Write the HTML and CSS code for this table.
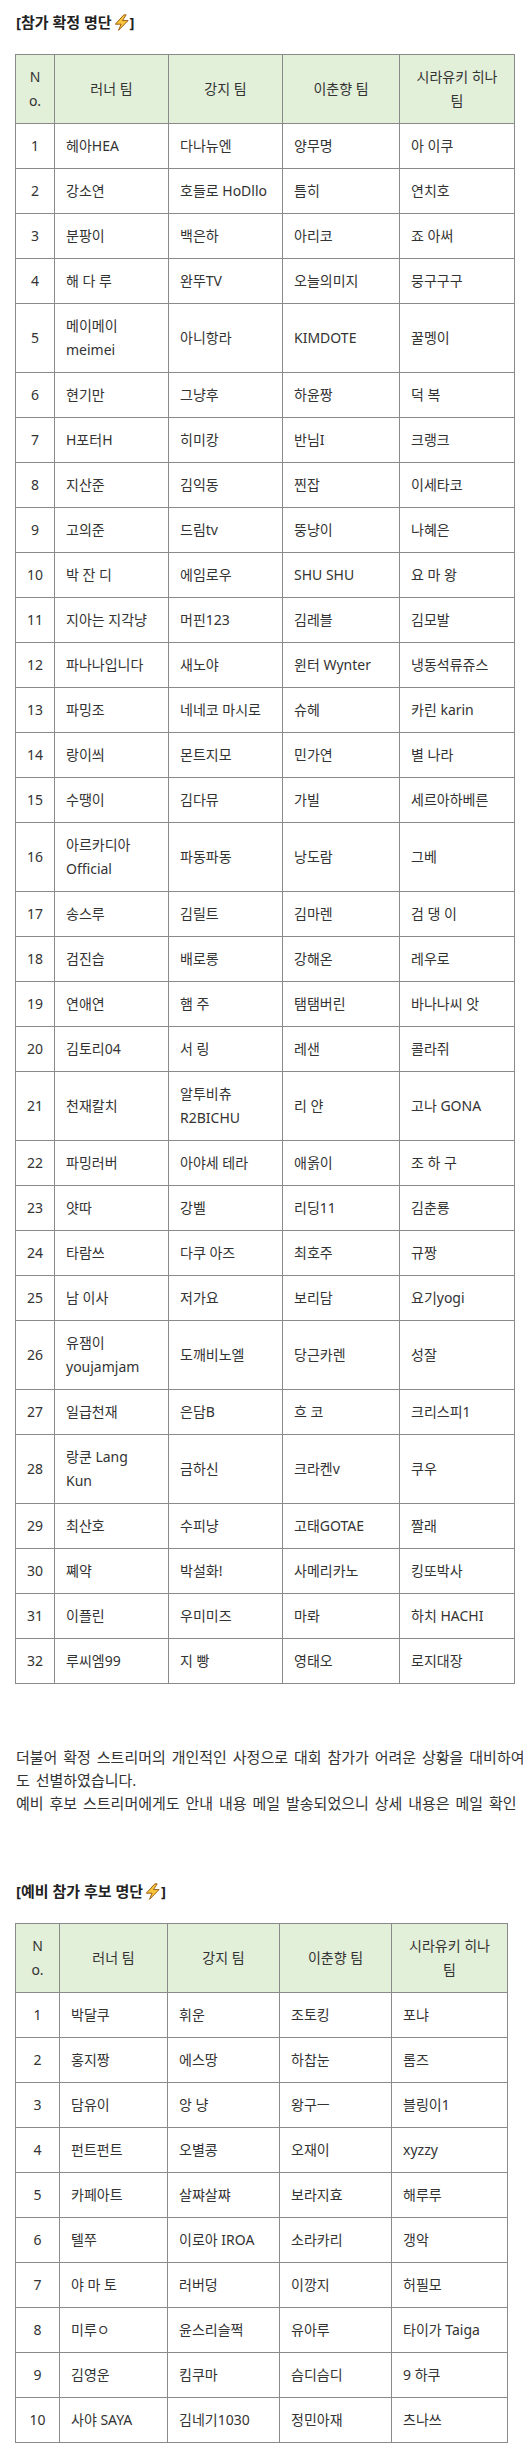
FILE: index.html
```html
<!DOCTYPE html>
<html lang="ko">
<head>
<meta charset="utf-8">
<title>참가 확정 명단</title>
<link rel="stylesheet" href="styles.css">
</head>
<body>
<div class="post">
  <p class="heading">[참가 확정 명단<svg class="bolt" viewBox="0 0 16 16" aria-hidden="true"><polygon points="10.2,0.8 2.2,9.6 7.6,9.6 5.2,15.4 14.2,6.2 8.9,6.2 12.4,0.8"/></svg>]</p>
  <table class="roster roster--main">
    <colgroup>
      <col class="c-no"><col class="c-a"><col class="c-b"><col class="c-c"><col class="c-d">
    </colgroup>
    <thead>
      <tr><th class="num">No.</th><th>러너 팀</th><th>강지 팀</th><th>이춘향 팀</th><th>시라유키 히나 팀</th></tr>
    </thead>
    <tbody>
      <tr><td class="num">1</td><td>헤아HEA</td><td>다나뉴엔</td><td>양무명</td><td>아 이쿠</td></tr>
      <tr><td class="num">2</td><td>강소연</td><td>호들로 HoDllo</td><td>틈히</td><td>연치호</td></tr>
      <tr><td class="num">3</td><td>분팡이</td><td>백은하</td><td>아리코</td><td>죠 아써</td></tr>
      <tr><td class="num">4</td><td>해 다 루</td><td>완뚜TV</td><td>오늘의미지</td><td>뭉구구구</td></tr>
      <tr><td class="num">5</td><td>메이메이 meimei</td><td>아니항라</td><td>KIMDOTE</td><td>꿀멩이</td></tr>
      <tr><td class="num">6</td><td>현기만</td><td>그냥후</td><td>하윤짱</td><td>덕 복</td></tr>
      <tr><td class="num">7</td><td>H포터H</td><td>히미캉</td><td>반님I</td><td>크랭크</td></tr>
      <tr><td class="num">8</td><td>지산준</td><td>김익동</td><td>찐잡</td><td>이세타코</td></tr>
      <tr><td class="num">9</td><td>고의준</td><td>드림tv</td><td>뚱냥이</td><td>나혜은</td></tr>
      <tr><td class="num">10</td><td>박 잔 디</td><td>에임로우</td><td>SHU SHU</td><td>요 마 왕</td></tr>
      <tr><td class="num">11</td><td>지아는 지각냥</td><td>머핀123</td><td>김레블</td><td>김모발</td></tr>
      <tr><td class="num">12</td><td>파나나입니다</td><td>새노야</td><td>윈터 Wynter</td><td>냉동석류쥬스</td></tr>
      <tr><td class="num">13</td><td>파밍조</td><td>네네코 마시로</td><td>슈헤</td><td>카린 karin</td></tr>
      <tr><td class="num">14</td><td>랑이씌</td><td>몬트지모</td><td>민가연</td><td>별 나라</td></tr>
      <tr><td class="num">15</td><td>수땡이</td><td>김다뮤</td><td>가빌</td><td>세르아하베른</td></tr>
      <tr><td class="num">16</td><td>아르카디아 Official</td><td>파동파동</td><td>낭도람</td><td>그베</td></tr>
      <tr><td class="num">17</td><td>송스루</td><td>김릴트</td><td>김마렌</td><td>검 댕 이</td></tr>
      <tr><td class="num">18</td><td>검진습</td><td>배로롱</td><td>강해온</td><td>레우로</td></tr>
      <tr><td class="num">19</td><td>연애연</td><td>햄 주</td><td>탬탬버린</td><td>바나나씨 앗</td></tr>
      <tr><td class="num">20</td><td>김토리04</td><td>서 링</td><td>레샌</td><td>콜라쥐</td></tr>
      <tr><td class="num">21</td><td>천재칼치</td><td>알투비츄 R2BICHU</td><td>리 얀</td><td>고나 GONA</td></tr>
      <tr><td class="num">22</td><td>파밍러버</td><td>아야세 테라</td><td>애옭이</td><td>조 하 구</td></tr>
      <tr><td class="num">23</td><td>얏따</td><td>강벨</td><td>리딩11</td><td>김춘룡</td></tr>
      <tr><td class="num">24</td><td>타람쓰</td><td>다쿠 아즈</td><td>최호주</td><td>규짱</td></tr>
      <tr><td class="num">25</td><td>남 이사</td><td>저가요</td><td>보리담</td><td>요기yogi</td></tr>
      <tr><td class="num">26</td><td>유잼이 youjamjam</td><td>도깨비노엘</td><td>당근카렌</td><td>성잘</td></tr>
      <tr><td class="num">27</td><td>일급천재</td><td>은담B</td><td>흐 코</td><td>크리스피1</td></tr>
      <tr><td class="num">28</td><td>랑쿤 Lang Kun</td><td>금하신</td><td>크라켄v</td><td>쿠우</td></tr>
      <tr><td class="num">29</td><td>최산호</td><td>수피냥</td><td>고태GOTAE</td><td>짤래</td></tr>
      <tr><td class="num">30</td><td>쪠약</td><td>박설화!</td><td>사메리카노</td><td>킹또박사</td></tr>
      <tr><td class="num">31</td><td>이플린</td><td>우미미즈</td><td>마롸</td><td>하치 HACHI</td></tr>
      <tr><td class="num">32</td><td>루씨엠99</td><td>지 빵</td><td>영태오</td><td>로지대장</td></tr>
    </tbody>
  </table>

  <p class="notice">더불어 확정 스트리머의 개인적인 사정으로 대회 참가가 어려운 상황을 대비하여, 예비 참가 후보 스트리머도 선별하였습니다.<br>예비 후보 스트리머에게도 안내 내용 메일 발송되었으니 상세 내용은 메일 확인 바랍니다.</p>

  <p class="heading heading--reserve">[예비 참가 후보 명단<svg class="bolt" viewBox="0 0 16 16" aria-hidden="true"><polygon points="10.2,0.8 2.2,9.6 7.6,9.6 5.2,15.4 14.2,6.2 8.9,6.2 12.4,0.8"/></svg>]</p>
  <table class="roster roster--reserve">
    <colgroup>
      <col class="c-no"><col class="c-a"><col class="c-b"><col class="c-c"><col class="c-d">
    </colgroup>
    <thead>
      <tr><th class="num">No.</th><th>러너 팀</th><th>강지 팀</th><th>이춘향 팀</th><th>시라유키 히나 팀</th></tr>
    </thead>
    <tbody>
      <tr><td class="num">1</td><td>박달쿠</td><td>휘운</td><td>조토킹</td><td>포냐</td></tr>
      <tr><td class="num">2</td><td>홍지짱</td><td>에스땅</td><td>하찹눈</td><td>롬즈</td></tr>
      <tr><td class="num">3</td><td>담유이</td><td>앙 냥</td><td>왕구ㅡ</td><td>블링이1</td></tr>
      <tr><td class="num">4</td><td>펀트펀트</td><td>오별콩</td><td>오재이</td><td>xyzzy</td></tr>
      <tr><td class="num">5</td><td>카페아트</td><td>살쨔살쨔</td><td>보라지효</td><td>해루루</td></tr>
      <tr><td class="num">6</td><td>텔쭈</td><td>이로아 IROA</td><td>소라카리</td><td>갱악</td></tr>
      <tr><td class="num">7</td><td>야 마 토</td><td>러버덩</td><td>이깡지</td><td>허필모</td></tr>
      <tr><td class="num">8</td><td>미루ㅇ</td><td>윤스리슬쩍</td><td>유아루</td><td>타이가 Taiga</td></tr>
      <tr><td class="num">9</td><td>김영운</td><td>킴쿠마</td><td>슴디슴디</td><td>9 하쿠</td></tr>
      <tr><td class="num">10</td><td>사야 SAYA</td><td>김네기1030</td><td>정민아재</td><td>츠나쓰</td></tr>
    </tbody>
  </table>
</div>
</body>
</html>
```

FILE: styles.css
```css
html, body {
  margin: 0;
  padding: 0;
  background: #ffffff;
}

body {
  font-family: "Noto Sans", "Noto Sans CJK KR", sans-serif;
  color: #333333;
  overflow-x: hidden;
}

.post {
  width: 704px;
  padding: 10px 0 20px 15px;
}

.heading {
  margin: 0 0 20px 1px;
  font-size: 15px;
  line-height: 24px;
  font-weight: 700;
  color: #222222;
}

.heading--reserve {
  margin-top: 64px;
}

.bolt {
  width: 17px;
  height: 17px;
  margin: 0 0 0 1px;
  vertical-align: -3px;
}

.bolt polygon {
  fill: #f8c63a;
  stroke: #9a5a10;
  stroke-width: 0.9;
  stroke-linejoin: round;
}

.roster {
  border-collapse: collapse;
  table-layout: fixed;
  font-size: 14px;
  line-height: 24px;
}

.roster th,
.roster td {
  border: 1px solid #8a8a8a;
  padding: 10px 11px;
  text-align: left;
  vertical-align: middle;
  font-weight: 400;
  color: #333333;
}

.roster th {
  background: #e2efd9;
  text-align: center;
}

.roster th.num {
  word-break: break-all;
}

.roster td.num {
  text-align: center;
  padding-left: 0;
  padding-right: 0;
}

.roster--main { width: 499px; }
.roster--main .c-no { width: 39px; }
.roster--main .c-a { width: 114px; }
.roster--main .c-b { width: 114px; }
.roster--main .c-c { width: 117px; }
.roster--main .c-d { width: 115px; }

.roster--reserve { width: 492px; }
.roster--reserve .c-no { width: 44px; }
.roster--reserve .c-a { width: 108px; }
.roster--reserve .c-b { width: 112px; }
.roster--reserve .c-c { width: 112px; }
.roster--reserve .c-d { width: 116px; }

.notice {
  width: 686px;
  margin: 62px 0 0 1px;
  font-size: 15px;
  line-height: 23px;
  word-spacing: 2px;
  color: #333333;
}
```
